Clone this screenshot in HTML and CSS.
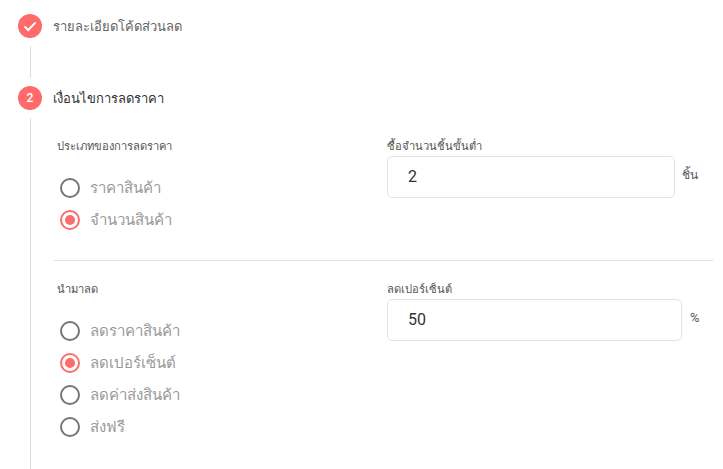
FILE: index.html
```html
<!DOCTYPE html>
<html lang="th">
<head>
<meta charset="utf-8">
<title>เงื่อนไขการลดราคา</title>
<link rel="stylesheet" href="styles.css">
</head>
<body>
<div class="stepper">
  <div class="step-head">
    <span class="step-icon"><svg width="14" height="14" viewBox="0 0 14 14"><path d="M1.5 7.4 5.2 11 12.6 3.4" fill="none" stroke="#fff" stroke-width="2"/></svg></span>
    <span class="step-title done">รายละเอียดโค้ดส่วนลด</span>
  </div>
  <div class="connector short"></div>
  <div class="step-head">
    <span class="step-icon">2</span>
    <span class="step-title">เงื่อนไขการลดราคา</span>
  </div>
  <div class="connector body">
    <section class="row first">
      <div class="col-left">
        <div class="label">ประเภทของการลดราคา</div>
        <div class="radios">
          <div class="radio"><span class="dot"></span>ราคาสินค้า</div>
          <div class="radio on"><span class="dot"></span>จำนวนสินค้า</div>
        </div>
      </div>
      <div class="col-right">
        <div class="label">ซื้อจำนวนชิ้นขั้นต่ำ</div>
        <div class="field-line">
          <div class="input narrow">2</div>
          <span class="unit">ชิ้น</span>
        </div>
      </div>
    </section>
    <section class="row second">
      <div class="col-left">
        <div class="label">นำมาลด</div>
        <div class="radios">
          <div class="radio"><span class="dot"></span>ลดราคาสินค้า</div>
          <div class="radio on"><span class="dot"></span>ลดเปอร์เซ็นต์</div>
          <div class="radio"><span class="dot"></span>ลดค่าส่งสินค้า</div>
          <div class="radio"><span class="dot"></span>ส่งฟรี</div>
        </div>
      </div>
      <div class="col-right">
        <div class="label">ลดเปอร์เซ็นต์</div>
        <div class="field-line">
          <div class="input wide">50</div>
          <span class="unit pct">%</span>
        </div>
      </div>
    </section>
  </div>
</div>
</body>
</html>
```
FILE: styles.css
```css
* { box-sizing: border-box; }
html, body { margin: 0; height: 469px; overflow: hidden; background: #fff; }
body { font-family: Roboto, "Noto Sans", "DejaVu Sans", sans-serif; color: #333; }
.stepper { padding: 14px 0 0 18px; }
.step-head { display: flex; align-items: center; height: 24px; gap: 11px; }
.step-icon {
  width: 24px; height: 24px; border-radius: 50%; background: #ff6b6b; color: #fff;
  display: flex; align-items: center; justify-content: center; font-size: 12px; font-weight: 500; flex: none;
}
.step-title { font-size: 13px; color: #333; font-weight: 500; }
.step-title.done { color: #666; font-weight: 400; }
.connector { margin-left: 12px; border-left: 1px solid #ddd; }
.connector.short { height: 32px; margin-top: 8px; margin-bottom: 8px; }
.connector.body { margin-top: 8px; padding-left: 23px; height: 360px; padding-right: 10px; }
.row { display: flex; }
.row.first { padding-top: 19px; height: 143px; border-bottom: 1px solid #e0e0e0; }
.row.second { padding-top: 19px; }
.col-left { width: 333px; padding-left: 3px; flex: none; }
.label { font-size: 11.2px; line-height: 19px; color: #555; }
.radios { margin-top: 16px; padding-left: 3px; }
.radio { display: flex; align-items: center; height: 32px; gap: 10px; font-size: 15px; color: #999; }
.dot { width: 20px; height: 20px; border-radius: 50%; border: 2px solid #757575; position: relative; flex: none; }
.radio.on .dot { border-color: #ff6b6b; }
.radio.on .dot::after {
  content: ""; position: absolute; inset: 3px; border-radius: 50%; background: #ff6b6b;
}
.field-line { display: flex; align-items: flex-start; }
.input {
  height: 42px; border: 1px solid #e4e4e4; border-radius: 5px; background: #fff;
  font-size: 16px; line-height: 40px; color: #333; padding-left: 20px;
}
.input.narrow { width: 288px; }
.input.wide { width: 295px; }
.unit { font-size: 12px; color: #555; margin-left: 7px; line-height: 38px; }
.unit.pct { font-size: 13px; margin-left: 8px; line-height: 38px; }
```
